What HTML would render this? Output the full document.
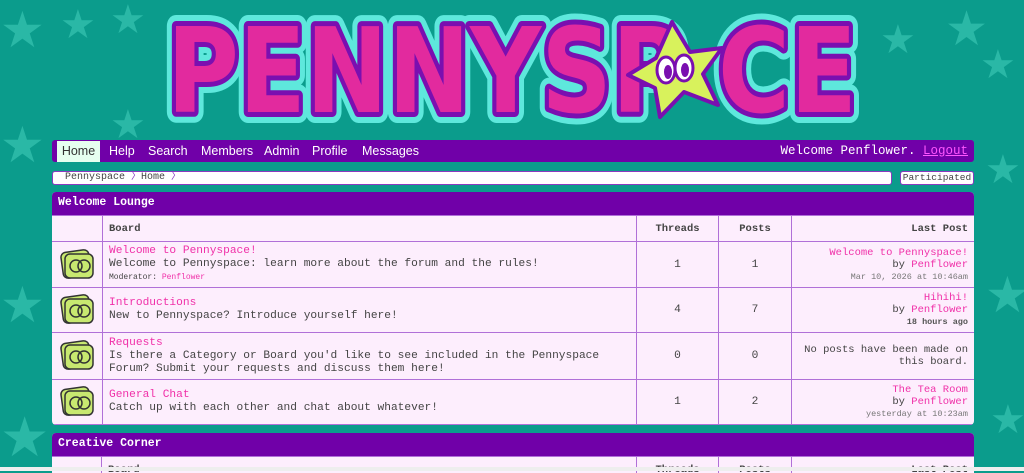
<!DOCTYPE html>
<html><head><style>
body{margin:0;width:1024px;height:471px;overflow:hidden;background:#0b9c8c;font-family:"Liberation Mono",monospace;position:relative}
.star{position:absolute;color:#2ab8a6;font-family:"DejaVu Sans",sans-serif;line-height:1}
.nav{position:absolute;left:52px;top:140px;width:922px;height:22px;background:#7000a8;border-radius:3px}
.nav span{position:absolute;top:4px;font:12.5px "Liberation Sans",sans-serif;color:#fff}
.nav .home{left:5px;top:1px;height:21px;width:43px;background:#e6fff0;color:#333;text-align:center;line-height:21px}
.bc{position:absolute;left:52px;top:171px;width:838px;height:12px;background:#fff;border:1px solid #8a3ac0;border-radius:3px;font-size:10px;color:#444;line-height:12px}
.part{position:absolute;left:900px;top:171px;width:72px;height:12px;background:#fff;border:1px solid #8a3ac0;border-radius:3px;font-size:9.5px;color:#444;line-height:12px;text-align:center}
.cat{position:absolute;left:52px;width:922px;background:#fdeefd;border-radius:4px;overflow:hidden}
.ch{background:#7000a8;height:23px;color:#fff;font-weight:bold;font-size:11.5px;line-height:21px;padding-left:6px}
table{border-collapse:collapse;width:922px;font-size:11.2px;color:#444}
td,th{border:1px solid #b070d8;padding:0 6px;vertical-align:middle}
tr>*:first-child{border-left:none}tr>*:last-child{border-right:none}
th{height:25px;font-size:10.5px;color:#444}
a{color:#f030a8;text-decoration:none}
.c{text-align:center}.r{text-align:right;font-size:10.5px;line-height:12px}
.sm{font-size:8px}.gr{color:#777;font-size:8.5px}
</style></head><body>
<div class="star" style="left:0;top:5px;font-size:50px">★</div>
<div class="star" style="left:60px;top:5px;font-size:40px">★</div>
<div class="star" style="left:110px;top:0;font-size:40px">★</div>
<div class="star" style="left:880px;top:20px;font-size:40px">★</div>
<div class="star" style="left:945px;top:5px;font-size:48px">★</div>
<div class="star" style="left:980px;top:45px;font-size:40px">★</div>
<div class="star" style="left:0;top:120px;font-size:50px">★</div>
<div class="star" style="left:985px;top:150px;font-size:40px">★</div>
<div class="star" style="left:985px;top:270px;font-size:50px">★</div>
<div class="star" style="left:0;top:280px;font-size:50px">★</div>
<div class="star" style="left:0;top:410px;font-size:55px">★</div>
<div class="star" style="left:990px;top:400px;font-size:40px">★</div>
<div class="star" style="left:110px;top:105px;font-size:40px">★</div>
<svg style="position:absolute;left:0;top:0" width="1024" height="135">
<text x="167" y="112" font-family="DejaVu Sans" font-weight="bold" font-size="118" textLength="690" lengthAdjust="spacingAndGlyphs" fill="#5ee8dc" stroke="#5ee8dc" stroke-width="22" stroke-linejoin="round">PENNYSP CE</text>
<text x="167" y="112" font-family="DejaVu Sans" font-weight="bold" font-size="118" textLength="690" lengthAdjust="spacingAndGlyphs" fill="#e22a9e" stroke="#7a0fb0" stroke-width="10" stroke-linejoin="round" paint-order="stroke">PENNYSP CE</text>
<polygon points="672,22 690,52 722,48 703,74 718,105 684,92 660,117 655,88 628,75 656,58" fill="#d8f25c" stroke="#7a0fb0" stroke-width="4" stroke-linejoin="round"/>
<ellipse cx="666" cy="70" rx="9" ry="13" fill="#fff" stroke="#7a0fb0" stroke-width="3"/>
<ellipse cx="684" cy="68" rx="9" ry="13" fill="#fff" stroke="#7a0fb0" stroke-width="3"/>
<ellipse cx="668" cy="72" rx="4" ry="7" fill="#7a0fb0"/><ellipse cx="685" cy="70" rx="4" ry="7" fill="#7a0fb0"/>
</svg>
<div class="nav"><span class="home">Home</span><span style="left:57px">Help</span><span style="left:96px">Search</span><span style="left:149px">Members</span><span style="left:212px">Admin</span><span style="left:260px">Profile</span><span style="left:310px">Messages</span>
<span style="right:6px;font-family:'Liberation Mono',monospace">Welcome Penflower. <u style="color:#ff55ff">Logout</u></span></div>
<div class="bc">&nbsp; Pennyspace <span style="color:#8a3ac0">〉</span>Home <span style="color:#8a3ac0">〉</span></div>
<div class="part">Participated</div>
<div class="cat" style="top:192px;height:233px">
<div class="ch">Welcome Lounge</div>
<table><tr><th style="width:37px"></th><th style="text-align:left">Board</th><th style="width:69px">Threads</th><th style="width:60px">Posts</th><th style="width:170px;text-align:right">Last Post</th></tr>
<tr style="height:46px"><td><svg width="38" height="34"><rect x="4" y="5" width="28" height="26" rx="5" fill="#c8e870" stroke="#333" stroke-width="1.5" transform="rotate(-8 18 18)"/><rect x="7" y="8" width="28" height="24" rx="5" fill="#c8e870" stroke="#333" stroke-width="1.5"/><ellipse cx="18" cy="20" rx="6" ry="6" fill="none" stroke="#333" stroke-width="1.5"/><ellipse cx="26" cy="20" rx="6" ry="6" fill="none" stroke="#333" stroke-width="1.5"/></svg></td><td style="line-height:13px"><a>Welcome to Pennyspace!</a><br>Welcome to Pennyspace: learn more about the forum and the rules!<br><span class="sm">Moderator: <a>Penflower</a></span></td><td class="c">1</td><td class="c">1</td><td class="r"><a>Welcome to Pennyspace!</a><br>by <a>Penflower</a><br><span class="gr">Mar 10, 2026 at 10:46am</span></td></tr>
<tr style="height:45px"><td><svg width="38" height="34"><rect x="4" y="5" width="28" height="26" rx="5" fill="#c8e870" stroke="#333" stroke-width="1.5" transform="rotate(-8 18 18)"/><rect x="7" y="8" width="28" height="24" rx="5" fill="#c8e870" stroke="#333" stroke-width="1.5"/><ellipse cx="18" cy="20" rx="6" ry="6" fill="none" stroke="#333" stroke-width="1.5"/><ellipse cx="26" cy="20" rx="6" ry="6" fill="none" stroke="#333" stroke-width="1.5"/></svg></td><td style="line-height:13px"><a>Introductions</a><br>New to Pennyspace? Introduce yourself here!</td><td class="c">4</td><td class="c">7</td><td class="r"><a>Hihihi!</a><br>by <a>Penflower</a><br><b class="gr" style="color:#555">18 hours ago</b></td></tr>
<tr style="height:47px"><td><svg width="38" height="34"><rect x="4" y="5" width="28" height="26" rx="5" fill="#c8e870" stroke="#333" stroke-width="1.5" transform="rotate(-8 18 18)"/><rect x="7" y="8" width="28" height="24" rx="5" fill="#c8e870" stroke="#333" stroke-width="1.5"/><ellipse cx="18" cy="20" rx="6" ry="6" fill="none" stroke="#333" stroke-width="1.5"/><ellipse cx="26" cy="20" rx="6" ry="6" fill="none" stroke="#333" stroke-width="1.5"/></svg></td><td style="line-height:13px"><a>Requests</a><br>Is there a Category or Board you'd like to see included in the Pennyspace<br>Forum? Submit your requests and discuss them here!</td><td class="c">0</td><td class="c">0</td><td class="r">No posts have been made on<br>this board.</td></tr>
<tr style="height:45px"><td><svg width="38" height="34"><rect x="4" y="5" width="28" height="26" rx="5" fill="#c8e870" stroke="#333" stroke-width="1.5" transform="rotate(-8 18 18)"/><rect x="7" y="8" width="28" height="24" rx="5" fill="#c8e870" stroke="#333" stroke-width="1.5"/><ellipse cx="18" cy="20" rx="6" ry="6" fill="none" stroke="#333" stroke-width="1.5"/><ellipse cx="26" cy="20" rx="6" ry="6" fill="none" stroke="#333" stroke-width="1.5"/></svg></td><td style="line-height:13px"><a>General Chat</a><br>Catch up with each other and chat about whatever!</td><td class="c">1</td><td class="c">2</td><td class="r"><a>The Tea Room</a><br>by <a>Penflower</a><br><span class="gr">yesterday at 10:23am</span></td></tr>
</table></div>
<div class="cat" style="top:433px;height:40px;border-radius:4px 4px 0 0">
<div class="ch">Creative Corner</div>
<table><tr><th style="width:37px"></th><th style="text-align:left">Board</th><th style="width:69px">Threads</th><th style="width:60px">Posts</th><th style="width:170px;text-align:right">Last Post</th></tr></table></div>
<div style="position:absolute;left:0;top:467px;width:1024px;height:4px;background:#eee"></div>
</body></html>
